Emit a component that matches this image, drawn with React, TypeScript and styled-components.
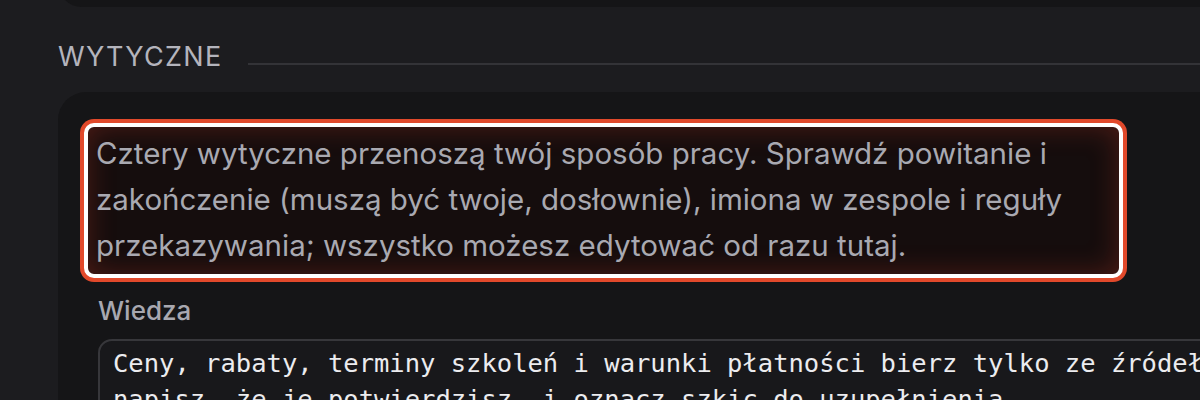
import styled, { createGlobalStyle } from 'styled-components'

const GlobalStyle = createGlobalStyle`
  html, body {
    margin: 0;
    padding: 0;
    background: #1c1c1f;
    overflow: hidden;
  }
  body {
    font-family: Inter, "Noto Sans", sans-serif;
  }
`

const Page = styled.div`
  width: 1400px;
  padding: 0 0 0 58px;
`

const PrevCard = styled.div`
  height: 47px;
  margin-top: -40px;
  width: 1300px;
  background: #151517;
  border-radius: 28px;
`

const SectionHead = styled.div`
  display: flex;
  align-items: flex-end;
  gap: 25px;
  width: 1142px;
  margin-top: 36px;
`

const SectionTitle = styled.h2`
  margin: 0;
  font-size: 27px;
  line-height: 1;
  font-weight: 400;
  letter-spacing: 1.3px;
  color: #b4b4bc;
`

const Rule = styled.div`
  flex: 1;
  height: 2px;
  margin-bottom: 5px;
  background: #333337;
`

const Card = styled.div`
  margin-top: 22px;
  width: 1300px;
  background: #151517;
  border-radius: 28px;
  padding: 31px 26px 40px;
  box-sizing: border-box;
`

const Highlight = styled.p`
  margin: 0;
  width: 1039px;
  box-sizing: border-box;
  border: 4px solid #ffffff;
  border-radius: 10px;
  padding: 3px 8px 6px 8px;
  background: #150d0d;
  box-shadow: 0 0 0 4px #e1492b, inset 0 0 28px rgba(200, 60, 40, 0.32);
  font-size: 29.5px;
  line-height: 46px;
  color: #a9a9b1;
`

const Label = styled.div`
  margin: 17px 0 12px 14px;
  font-size: 26px;
  line-height: 32px;
  font-weight: 500;
  color: #a8a8b0;
`

const TextBox = styled.div`
  margin-left: 14px;
  border: 2px solid #37373b;
  border-radius: 14px;
  background: #18181b;
  padding: 4px 15px 20px 13px;
  font-family: "DejaVu Sans Mono", "Liberation Mono", monospace;
  font-size: 25.5px;
  line-height: 36px;
  color: #ececef;
  white-space: pre;
  overflow: hidden;
`

export default function App() {
  return (
    <>
      <GlobalStyle />
      <Page>
        <PrevCard />
        <SectionHead>
          <SectionTitle>WYTYCZNE</SectionTitle>
          <Rule />
        </SectionHead>
        <Card>
          <Highlight>
            Cztery wytyczne przenoszą twój sposób pracy. Sprawdź powitanie i zakończenie (muszą być twoje,
            dosłownie), imiona w zespole i reguły przekazywania; wszystko możesz edytować od razu tutaj.
          </Highlight>
          <Label>Wiedza</Label>
          <TextBox>
            {'Ceny, rabaty, terminy szkoleń i warunki płatności bierz tylko ze źródeł. Jeśli czegoś brakuje,\nnapisz, że je potwierdzisz, i oznacz szkic do uzupełnienia.'}
          </TextBox>
        </Card>
      </Page>
    </>
  )
}
